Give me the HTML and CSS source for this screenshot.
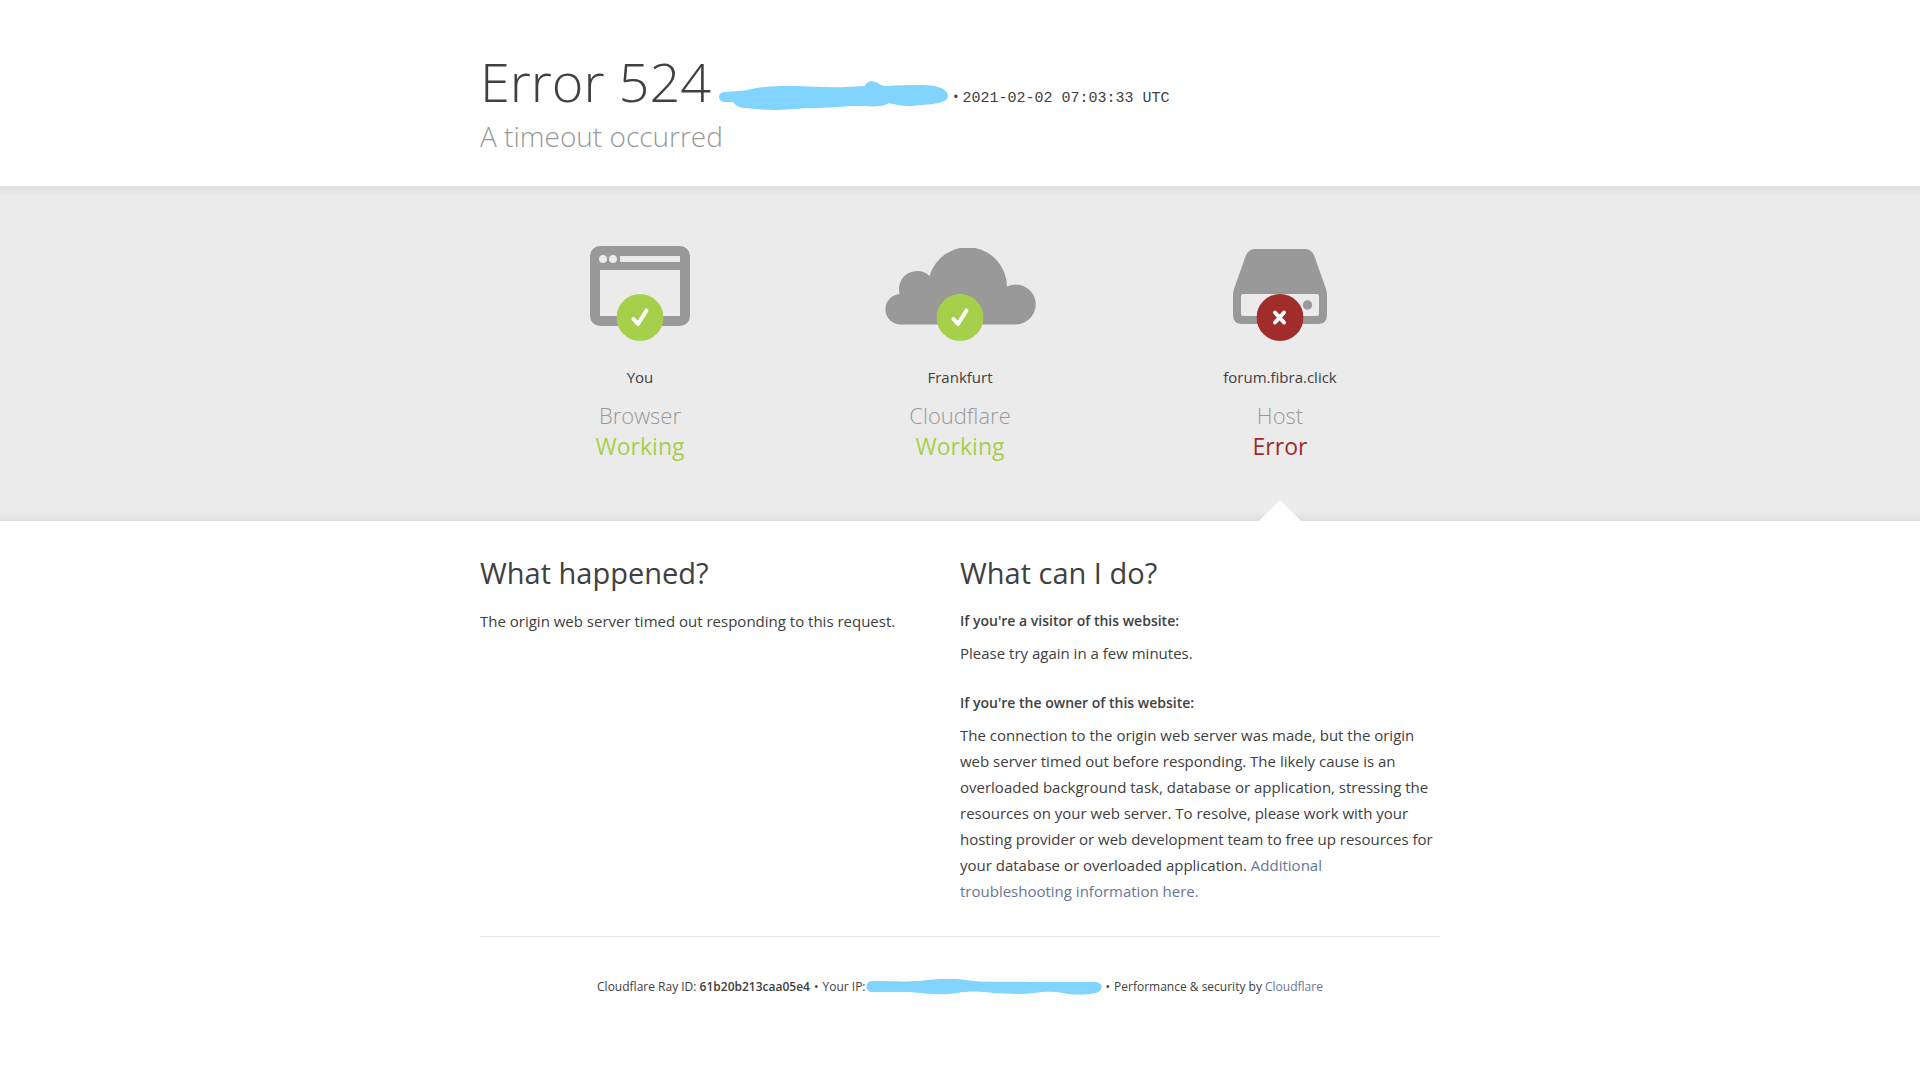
FILE: index.html
```html
<!DOCTYPE html>
<html lang="en">
<head>
  <meta charset="UTF-8" />
  <meta name="viewport" content="width=device-width, initial-scale=1.0" />
  <title>forum.fibra.click | 524: A timeout occurred</title>
  <link rel="stylesheet" href="styles.css">
</head>
<body>
  <header class="container header">
    <div class="title-row">
      <h1>Error 524</h1>
      <div class="meta">
        <svg class="scribble" width="230" height="29" viewBox="0 0 230 29" aria-hidden="true">
          <path d="M6 11 C16 10 24 10 33 8 C45 5 58 5 72 5 C92 5 108 7 127 6 L146 5 C147 1 152 -1 156 1 C160 2 162 5 166 5 C178 4 190 4 202 4 C216 4 229 7 229 15 C229 22 215 23 202 24 C191 26 180 25 170 22 C163 27 150 25 140 25 C120 25 106 28 87 27 C68 29 48 30 28 27 C21 27 17 25 14 21 L6 21 C-2 21 -2 11 6 11Z"/>
        </svg>
        <span class="dot">•</span>
        <time class="timestamp" datetime="2021-02-02T07:03:33Z">2021-02-02 07:03:33 UTC</time>
      </div>
    </div>
    <h2 class="subtitle">A timeout occurred</h2>
  </header>

  <section class="status">
    <div class="container status-grid">
      <div class="status-item">
        <div class="icon">
          <svg width="100" height="80" viewBox="0 0 100 80">
            <path fill-rule="evenodd" d="M10 0H90A10 10 0 0 1 100 10V70A10 10 0 0 1 90 80H10A10 10 0 0 1 0 70V10A10 10 0 0 1 10 0Z M10 24V70H90V24Z M30 10V16H90V10Z M9 13A4 4 0 1 0 17 13A4 4 0 1 0 9 13Z M19 13A4 4 0 1 0 27 13A4 4 0 1 0 19 13Z"/>
          </svg>
          <svg class="badge ok" viewBox="0 0 47 47">
            <circle cx="23.5" cy="23.5" r="23.5"/>
            <path d="M17 25L21.5 30L30 16.5"/>
          </svg>
        </div>
        <span class="name">You</span>
        <h3>Browser</h3>
        <span class="state working">Working</span>
      </div>
      <div class="status-item">
        <div class="icon">
          <svg class="cloud" width="152" height="77" viewBox="0 0 152 77">
            <path d="M15.3 76.5A15.3 15.3 0 0 1 15.7 46A18 18 0 0 1 45.5 28A39.5 39.5 0 0 1 123 38.5A20 20 0 1 1 131.5 76.5Z"/>
          </svg>
          <svg class="badge ok" viewBox="0 0 47 47">
            <circle cx="23.5" cy="23.5" r="23.5"/>
            <path d="M17 25L21.5 30L30 16.5"/>
          </svg>
        </div>
        <span class="name">Frankfurt</span>
        <h3>Cloudflare</h3>
        <span class="state working">Working</span>
      </div>
      <div class="status-item">
        <div class="icon">
          <svg class="server" width="94" height="75" viewBox="0 0 94 75">
            <path fill-rule="evenodd" d="M22 0H72Q78 0 81 6L93 40Q94 43 94 46V66Q94 75 85 75H9Q0 75 0 66V46Q0 43 1 40L13 6Q16 0 22 0Z M10 45Q8 45 8 47V65Q8 67 10 67H84Q86 67 86 65V47Q86 45 84 45Z"/>
            <circle cx="74.5" cy="56" r="4.7"/>
          </svg>
          <svg class="badge fail" viewBox="0 0 47 47">
            <circle cx="23.5" cy="23.5" r="23.5"/>
            <path d="M18.5 18.5L27.5 28.5M27.5 18.5L18.5 28.5"/>
          </svg>
        </div>
        <span class="name">forum.fibra.click</span>
        <h3>Host</h3>
        <span class="state error">Error</span>
        <div class="caret"></div>
      </div>
    </div>
  </section>

  <main class="container details">
    <section>
      <h2>What happened?</h2>
      <p>The origin web server timed out responding to this request.</p>
    </section>
    <section>
      <h2>What can I do?</h2>
      <h4>If you're a visitor of this website:</h4>
      <p>Please try again in a few minutes.</p>
      <h4>If you're the owner of this website:</h4>
      <p>The connection to the origin web server was made, but the origin web server timed out before responding. The likely cause is an overloaded background task, database or application, stressing the resources on your web server. To resolve, please work with your hosting provider or web development team to free up resources for your database or overloaded application. <a href="#">Additional troubleshooting information here.</a></p>
    </section>
  </main>

  <footer class="container footer">
    <span>Cloudflare Ray ID: <strong>61b20b213caa05e4</strong></span>
    <span>•</span>
    <span class="ip">Your IP:<svg class="scribble" width="236" height="16" viewBox="0 0 236 16" aria-hidden="true">
      <path d="M5 2C22 2 39 3 54 2C68 0 85 -1 100 1C119 4 141 2 164 3H230C238 4 237 12 230 14C219 16 206 16 197 14C187 12 177 13 168 14C152 16 138 14 127 14C112 12 103 12 91 14C75 17 59 14 43 13L5 13C-1 12 -1 3 5 2Z"/>
    </svg></span>
    <span>•</span>
    <span>Performance &amp; security by <a href="#">Cloudflare</a></span>
  </footer>
</body>
</html>
```

FILE: styles.css
```css
:root {
  --text-color: #404040;
  --muted: #999;
  --band-bg: #ebebeb;
  --green: #a6d04c;
  --red: #a02c2c;
  --link: #667699;
  --scribble: #80d4ff;
}

body {
  margin: 0;
  background: white;
  color: var(--text-color);
  font-family: 'Segoe UI', 'Open Sans', 'Noto Sans', sans-serif;
  font-size: 15px;
  line-height: 26px;
}

h1, h2, h3, h4, p {
  margin: 0;
  font-weight: 400;
}

a {
  color: var(--link);
  text-decoration: none;
}

.container {
  max-width: 960px;
  margin: 0 auto;
}

.scribble {
  fill: var(--scribble);
  flex-shrink: 0;
}

.header {
  padding: 44px 0 32px;
}

.title-row {
  display: flex;
  align-items: baseline;
}

h1 {
  font-size: 54px;
  font-weight: 300;
  line-height: 74px;
}

.meta {
  margin-left: 8px;
}

.meta .scribble {
  vertical-align: -8px;
}

.timestamp {
  font-family: 'Liberation Mono', monospace;
  font-size: 15px;
}

.subtitle {
  font-size: 28px;
  font-weight: 300;
  line-height: 36px;
  color: var(--muted);
}

.status {
  background:
    linear-gradient(#dedede, transparent) top / 100% 9px no-repeat,
    linear-gradient(transparent, #dedede) bottom / 100% 9px no-repeat,
    var(--band-bg);
}

.status-grid {
  display: grid;
  grid-template-columns: repeat(3, 1fr);
}

.status-item {
  position: relative;
  display: flex;
  flex-direction: column;
  align-items: center;
  padding: 60px 0 59px;
}

.icon {
  position: relative;
  display: flex;
  justify-content: center;
  height: 95px;
  margin-bottom: 23px;
  fill: var(--muted);
}

.cloud {
  margin-top: 2px;
}

.server {
  margin-top: 3px;
}

.badge {
  position: absolute;
  bottom: 0;
  left: 50%;
  width: 47px;
  height: 47px;
  transform: translateX(-50%);
}

.badge path {
  fill: none;
  stroke: white;
  stroke-width: 4;
  stroke-linecap: round;
  stroke-linejoin: round;
}

.ok {
  fill: var(--green);
}

.fail {
  fill: var(--red);
}

h3,
.state {
  font-size: 23px;
  line-height: 31px;
}

h3 {
  margin-top: 10px;
  font-size: 22px;
  font-weight: 300;
  color: var(--muted);
}

.working {
  color: var(--green);
}

.error {
  color: var(--red);
}

/* notch pointing at the failing host */
.caret {
  position: absolute;
  bottom: 0;
  left: 50%;
  width: 42px;
  height: 21px;
  background: white;
  clip-path: polygon(50% 0, 100% 100%, 0 100%);
  transform: translateX(-50%);
}

.details {
  display: grid;
  grid-template-columns: 1fr 1fr;
  padding: 32px 0;
  border-bottom: 1px solid #e5e5e5;
}

.details section {
  padding-right: 4px;
}

.details h2 {
  margin-bottom: 16px;
  font-size: 29px;
  line-height: 39px;
}

h4 {
  margin-bottom: 6px;
  font-size: 14px;
  font-weight: 600;
}

p + h4 {
  margin-top: 24px;
}

.footer {
  display: flex;
  align-items: center;
  justify-content: center;
  gap: 4px;
  padding: 37px 0;
  font-size: 12px;
}

.footer strong {
  font-weight: 600;
}

.ip {
  display: flex;
  align-items: center;
}

@media (max-width: 960px) {
  .container {
    padding-left: 16px;
    padding-right: 16px;
  }

  .title-row,
  .footer {
    flex-wrap: wrap;
  }
}

@media (max-width: 720px) {
  .details {
    grid-template-columns: 1fr;
    gap: 32px;
  }
}
```
